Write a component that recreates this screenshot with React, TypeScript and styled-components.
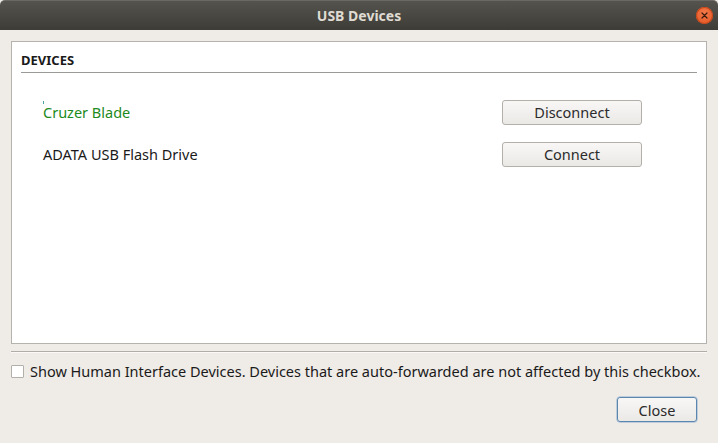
import styled, { createGlobalStyle } from "styled-components"

const Global = createGlobalStyle`
  html, body {
    margin: 0;
    padding: 0;
    background: #efebe7;
  }
  body {
    font-family: "Noto Sans", "DejaVu Sans", sans-serif;
  }
`

const Window = styled.div`
  width: 718px;
  height: 443px;
  display: flex;
  flex-direction: column;
  background: #efebe7;
  overflow: hidden;
`

const TitleBar = styled.div`
  height: 30px;
  flex: none;
  position: relative;
  display: flex;
  align-items: center;
  justify-content: center;
  background: linear-gradient(#55534d, #3d3c37);
  border-top: 1px solid #6a6862;
  border-radius: 5px 5px 0 0;
  box-sizing: border-box;
`

const Title = styled.span`
  color: #dfdbd2;
  font-weight: bold;
  font-size: 14px;
`

const CloseDot = styled.div`
  position: absolute;
  right: 5px;
  top: 6px;
  width: 17px;
  height: 17px;
  border-radius: 50%;
  background: radial-gradient(circle at 50% 35%, #f5794a, #e0531f);
  box-shadow: inset 0 0 0 1px #c3471b;
  display: flex;
  align-items: center;
  justify-content: center;
`

const Body = styled.div`
  flex: 1;
  display: flex;
  flex-direction: column;
  padding: 11px 11px 0 11px;
`

const Panel = styled.div`
  height: 303px;
  box-sizing: border-box;
  background: #ffffff;
  border: 1px solid #b6b3ae;
  padding: 9px 9px 0 9px;
`

const Heading = styled.div`
  font-size: 13px;
  font-weight: bold;
  color: #1a1a1a;
  height: 22px;
  line-height: 18px;
  border-bottom: 1px solid #9c9a97;
  box-sizing: border-box;
`

const DeviceList = styled.div`
  display: flex;
  flex-direction: column;
  gap: 18px;
  padding: 27px 55px 0 22px;
`

const DeviceRow = styled.div`
  display: flex;
  align-items: center;
  justify-content: space-between;
  height: 24px;
`

const DeviceName = styled.span<{ $connected?: boolean }>`
  position: relative;
  font-size: 14.5px;
  color: ${p => (p.$connected ? "#1c8a1c" : "#1a1a1a")};
`

const Caret = styled.span`
  position: absolute;
  left: 0;
  top: -1px;
  width: 1px;
  height: 3px;
  background: #4aa3a0;
`

const Button = styled.button<{ $focused?: boolean }>`
  width: 140px;
  height: 25px;
  box-sizing: border-box;
  border: 1px solid ${p => (p.$focused ? "#5b86b0" : "#b3afa9")};
  border-radius: 3px;
  background: linear-gradient(#f8f7f6, #ebe9e6);
  font-family: "Noto Sans", "DejaVu Sans", sans-serif;
  font-size: 14.5px;
  color: #2b2b2b;
  padding: 0;
  box-shadow: ${p => (p.$focused ? "0 0 0 0.5px #8fb0d0" : "none")};
`

const Separator = styled.div`
  margin-top: 7px;
  height: 1px;
  background: #b0ada8;
  border-bottom: 1px solid #fbfaf9;
`

const CheckRow = styled.label`
  display: flex;
  align-items: center;
  gap: 6px;
  margin-top: 8px;
  font-size: 14.5px;
  color: #1a1a1a;
  white-space: nowrap;
`

const Box = styled.span`
  width: 13px;
  height: 13px;
  box-sizing: border-box;
  background: #ffffff;
  border: 1px solid #b3b0ac;
  border-radius: 1px;
  flex: none;
`

const Footer = styled.div`
  display: flex;
  justify-content: flex-end;
  padding: 16px 10px 0 0;
`

const CloseButton = styled(Button)`
  width: 80px;
  height: 25px;
`

export default function App() {
  return (
    <Window>
      <Global />
      <TitleBar>
        <Title>USB Devices</Title>
        <CloseDot>
          <svg width="7" height="7" viewBox="0 0 7 7">
            <path d="M1 1 L6 6 M6 1 L1 6" stroke="#3a1a0c" strokeWidth="1.2" strokeLinecap="round" />
          </svg>
        </CloseDot>
      </TitleBar>
      <Body>
        <Panel>
          <Heading>DEVICES</Heading>
          <DeviceList>
            <DeviceRow>
              <DeviceName $connected>
                <Caret />
                Cruzer Blade
              </DeviceName>
              <Button>Disconnect</Button>
            </DeviceRow>
            <DeviceRow>
              <DeviceName>ADATA USB Flash Drive</DeviceName>
              <Button>Connect</Button>
            </DeviceRow>
          </DeviceList>
        </Panel>
        <Separator />
        <CheckRow>
          <Box />
          Show Human Interface Devices. Devices that are auto-forwarded are not affected by this checkbox.
        </CheckRow>
        <Footer>
          <CloseButton $focused>Close</CloseButton>
        </Footer>
      </Body>
    </Window>
  )
}
